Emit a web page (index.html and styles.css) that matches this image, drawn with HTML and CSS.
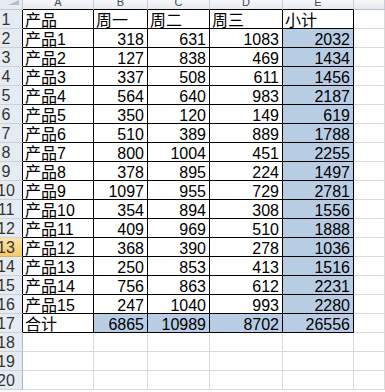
FILE: index.html
```html
<!DOCTYPE html>
<html lang="zh">
<head>
<meta charset="utf-8">
<link rel="stylesheet" href="styles.css">
</head>
<body>
<div class="sheet">
  <div class="corner"><span class="tri"></span></div>
  <div class="h hb">A</div><div class="h hb">B</div><div class="h hb">C</div><div class="h hb">D</div><div class="h hb">E</div><div class="h"></div>

  <div class="r rb">1</div><div class="c b t">产品</div><div class="c b t">周一</div><div class="c b t">周二</div><div class="c b t">周三</div><div class="c b t">小计</div><div class="c"></div>
  <div class="r rb">2</div><div class="c b t">产品1</div><div class="c b n">318</div><div class="c b n">631</div><div class="c b n">1083</div><div class="c b n f">2032</div><div class="c"></div>
  <div class="r rb">3</div><div class="c b t">产品2</div><div class="c b n">127</div><div class="c b n">838</div><div class="c b n">469</div><div class="c b n f">1434</div><div class="c"></div>
  <div class="r rb">4</div><div class="c b t">产品3</div><div class="c b n">337</div><div class="c b n">508</div><div class="c b n">611</div><div class="c b n f">1456</div><div class="c"></div>
  <div class="r rb">5</div><div class="c b t">产品4</div><div class="c b n">564</div><div class="c b n">640</div><div class="c b n">983</div><div class="c b n f">2187</div><div class="c"></div>
  <div class="r rb">6</div><div class="c b t">产品5</div><div class="c b n">350</div><div class="c b n">120</div><div class="c b n">149</div><div class="c b n f">619</div><div class="c"></div>
  <div class="r rb">7</div><div class="c b t">产品6</div><div class="c b n">510</div><div class="c b n">389</div><div class="c b n">889</div><div class="c b n f">1788</div><div class="c"></div>
  <div class="r rb">8</div><div class="c b t">产品7</div><div class="c b n">800</div><div class="c b n">1004</div><div class="c b n">451</div><div class="c b n f">2255</div><div class="c"></div>
  <div class="r rb">9</div><div class="c b t">产品8</div><div class="c b n">378</div><div class="c b n">895</div><div class="c b n">224</div><div class="c b n f">1497</div><div class="c"></div>
  <div class="r rb">10</div><div class="c b t">产品9</div><div class="c b n">1097</div><div class="c b n">955</div><div class="c b n">729</div><div class="c b n f">2781</div><div class="c"></div>
  <div class="r rb">11</div><div class="c b t">产品10</div><div class="c b n">354</div><div class="c b n">894</div><div class="c b n">308</div><div class="c b n f">1556</div><div class="c"></div>
  <div class="r rb">12</div><div class="c b t">产品11</div><div class="c b n">409</div><div class="c b n">969</div><div class="c b n">510</div><div class="c b n f">1888</div><div class="c"></div>
  <div class="r rb sel">13</div><div class="c b t">产品12</div><div class="c b n">368</div><div class="c b n">390</div><div class="c b n">278</div><div class="c b n f">1036</div><div class="c"></div>
  <div class="r rb">14</div><div class="c b t">产品13</div><div class="c b n">250</div><div class="c b n">853</div><div class="c b n">413</div><div class="c b n f">1516</div><div class="c"></div>
  <div class="r rb">15</div><div class="c b t">产品14</div><div class="c b n">756</div><div class="c b n">863</div><div class="c b n">612</div><div class="c b n f">2231</div><div class="c"></div>
  <div class="r rb">16</div><div class="c b t">产品15</div><div class="c b n">247</div><div class="c b n">1040</div><div class="c b n">993</div><div class="c b n f">2280</div><div class="c"></div>
  <div class="r rb">17</div><div class="c b t">合计</div><div class="c b n f">6865</div><div class="c b n f">10989</div><div class="c b n f">8702</div><div class="c b n f">26556</div><div class="c"></div>
  <div class="r">18</div><div class="c"></div><div class="c"></div><div class="c"></div><div class="c"></div><div class="c"></div><div class="c"></div>
  <div class="r">19</div><div class="c"></div><div class="c"></div><div class="c"></div><div class="c"></div><div class="c"></div><div class="c"></div>
  <div class="r">20</div><div class="c"></div><div class="c"></div><div class="c"></div><div class="c"></div><div class="c"></div><div class="c"></div>
</div>
</body>
</html>
```
FILE: styles.css
```css
html, body {
  margin: 0;
  padding: 0;
  background: #ffffff;
}
body {
  width: 385px;
  height: 392px;
  overflow: hidden;
  font-family: "Liberation Sans", "Noto Sans CJK SC", sans-serif;
  color: #000;
}
.sheet {
  display: grid;
  grid-template-columns: 23px 71px 54px 62px 73px 71px 31px;
  grid-template-rows: 10px repeat(20, 19px);
}
.sheet > div {
  box-sizing: border-box;
  border-right: 1px solid #d9d9d9;
  border-bottom: 1px solid #d9d9d9;
  overflow: hidden;
  white-space: nowrap;
}
.corner {
  background: #e8ecf2;
  border-right-color: #c3cad4 !important;
  border-bottom-color: #c3cad4 !important;
  display: flex;
  justify-content: flex-end;
  align-items: flex-start;
  padding-right: 3px;
}
.tri {
  width: 0;
  height: 0;
  border-left: 11px solid transparent;
  border-bottom: 5px solid #b7bec8;
}
.h {
  background: linear-gradient(#f7f8fa, #e6e9ee);
  border-right-color: #c8ced7 !important;
  border-bottom-color: #b8bfc9 !important;
  font-size: 11px;
  line-height: 10px;
  color: #3f4a5a;
  text-align: center;
  display: flex;
  justify-content: center;
  align-items: flex-end;
  padding-bottom: 2px;
}
.h.hb {
  border-bottom-color: #000 !important;
}
.r {
  background: #e6ebf2;
  border-right-color: #9eb6ce !important;
  border-bottom-color: #c9d2de !important;
  font-size: 16px;
  line-height: 16px;
  color: #333;
  display: flex;
  align-items: flex-end;
  justify-content: center;
  padding-right: 10px;
  padding-bottom: 0;
}
.r.rb {
  border-right-color: #000 !important;
}
.r.sel {
  background: linear-gradient(#fbe3a9, #f6c96b);
  border-bottom-color: #d7b36a !important;
}
.c {
  font-size: 16px;
  line-height: 14px;
  display: flex;
  align-items: flex-end;
}
.c.b {
  border-right-color: #000;
  border-bottom-color: #000;
}
.t {
  justify-content: flex-start;
  padding-left: 2px;
}
.n {
  justify-content: flex-end;
  padding-right: 3px;
}
.f {
  background: #b8cce4;
}
```
